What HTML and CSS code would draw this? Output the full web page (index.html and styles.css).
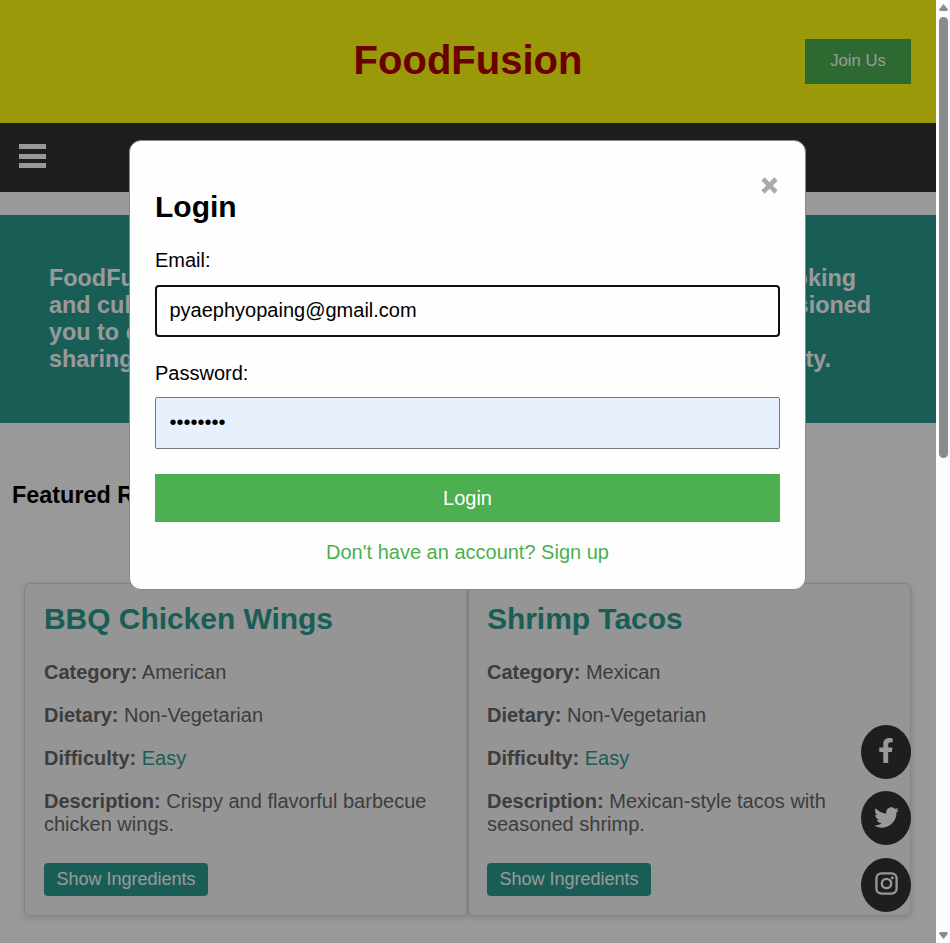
FILE: index.html
```html
<!DOCTYPE html>
<html lang="en">
<head>
<meta charset="utf-8">
<title>FoodFusion</title>
<link rel="stylesheet" href="styles.css">
</head>
<body>
<div class="page">
  <header class="header">
    <h1 class="brand">FoodFusion</h1>
    <button class="join">Join Us</button>
  </header>
  <nav class="nav">
    <span class="burger"><i></i><i></i><i></i></span>
  </nav>
  <section class="hero">
    <p class="line line-a"><span>FoodFusion</span><span>cooking</span></p>
    <p class="line line-b"><span>and culinary</span><span>passioned</span></p>
    <p class="line"><span>you to explore</span></p>
    <p class="line line-d"><span>sharing</span><span>community.</span></p>
  </section>
  <h2 class="featured">Featured Recipes</h2>
  <section class="cards">
    <article class="card">
      <h3>BBQ Chicken Wings</h3>
      <p><strong>Category:</strong> American</p>
      <p><strong>Dietary:</strong> Non-Vegetarian</p>
      <p><strong>Difficulty:</strong> <span class="easy">Easy</span></p>
      <p><strong>Description:</strong> Crispy and flavorful barbecue chicken wings.</p>
      <button class="show">Show Ingredients</button>
    </article>
    <article class="card">
      <h3>Shrimp Tacos</h3>
      <p><strong>Category:</strong> Mexican</p>
      <p><strong>Dietary:</strong> Non-Vegetarian</p>
      <p><strong>Difficulty:</strong> <span class="easy">Easy</span></p>
      <p><strong>Description:</strong> Mexican-style tacos with seasoned shrimp.</p>
      <button class="show">Show Ingredients</button>
    </article>
  </section>
  <aside class="social">
    <a class="facebook"><svg viewBox="0 0 320 512" width="16" height="25"><path d="M279.14 288l14.22-92.66h-88.91v-60.13c0-25.35 12.42-50.06 52.24-50.06h40.42V6.26S260.43 0 225.36 0c-73.22 0-121.08 44.38-121.08 124.72v70.62H22.89V288h81.39v224h100.17V288z"/></svg></a>
    <a><svg viewBox="0 0 512 512" width="25" height="25"><path d="M459.37 151.716c.325 4.548.325 9.097.325 13.645 0 138.72-105.583 298.558-298.558 298.558-59.452 0-114.68-17.219-161.137-47.106 8.447.974 16.568 1.299 25.34 1.299 49.055 0 94.213-16.568 130.274-44.832-46.132-.975-84.792-31.188-98.112-72.772 6.498.974 12.995 1.624 19.818 1.624 9.421 0 18.843-1.3 27.614-3.573-48.081-9.747-84.143-51.98-84.143-102.985v-1.299c13.969 7.797 30.214 12.67 47.431 13.319-28.264-18.843-46.781-51.005-46.781-87.391 0-19.492 5.197-37.36 14.294-52.954 51.655 63.675 129.3 105.258 216.365 109.807-1.624-7.797-2.599-15.918-2.599-24.04 0-57.828 46.782-104.934 104.934-104.934 30.213 0 57.502 12.67 76.67 33.137 23.715-4.548 46.456-13.32 66.599-25.34-7.798 24.366-24.366 44.833-46.132 57.827 21.117-2.273 41.584-8.122 60.426-16.243-14.292 20.791-32.161 39.308-52.628 54.253z"/></svg></a>
    <a class="instagram"><svg viewBox="0 0 23 23" width="23" height="23"><rect x="1.4" y="1.4" width="20.200" height="20.200" rx="5"/><circle cx="11.500" cy="11.500" r="4.700"/><circle class="dot" cx="17.300" cy="5.700" r="1.500"/></svg></a>
  </aside>
  <div class="overlay">
    <form class="modal">
      <svg class="close" viewBox="0 0 17 17" width="17" height="17"><path d="M2 2l13 13M15 2L2 15"/></svg>
      <h2>Login</h2>
      <label>Email:</label>
      <div class="field focused">pyaephyopaing@gmail.com</div>
      <label class="password">Password:</label>
      <div class="field filled">••••••••</div>
      <button class="login" type="button">Login</button>
      <a class="signup">Don't have an account? Sign up</a>
    </form>
  </div>
</div>
<div class="scrollbar">
  <svg class="arrow" viewBox="0 0 9 7" width="9" height="7"><path d="M4.500 0L9 5.500 8 7H1L0 5.500z"/></svg>
  <span class="thumb"></span>
  <svg class="arrow" viewBox="0 0 9 7" width="9" height="7"><path d="M4.500 7L9 1.500 8 0H1L0 1.500z"/></svg>
</div>
</body>
</html>
```
FILE: styles.css
```css
* { box-sizing: border-box; }
body {
  margin: 0;
  height: 943px;
  display: flex;
  overflow: hidden;
  font: 20px/23px "Liberation Sans", Arial, sans-serif;
  background: #fff;
}
h1, h2, h3, p { margin: 0; }
button { font-family: inherit; border: 0; padding: 0; }
.page { position: relative; width: 936px; height: 943px; overflow: hidden; }

.header {
  height: 123px;
  padding: 0 25px 1px;
  display: grid;
  grid-template-columns: 106px 1fr 106px;
  align-items: center;
  background: #ffff10;
}
.brand {
  grid-column: 2;
  text-align: center;
  font-size: 40px;
  line-height: 46px;
  color: #b30000;
  padding-bottom: 3px;
}
.join {
  height: 45px;
  background: #4caf50;
  color: #fff;
  font-size: 16.7px;
}
.nav {
  height: 69px;
  background: #333;
  padding: 21px 19px;
}
.burger { display: flex; flex-direction: column; gap: 4.5px; width: 27px; }
.burger i { height: 5px; background: #fff; }

.hero {
  margin-top: 23px;
  height: 208px;
  padding: 50px 49px;
  background: #2a9d8f;
  color: #fff;
  font-size: 23.4px;
  font-weight: bold;
}
.line { display: flex; justify-content: space-between; line-height: 27px; }
.line-a { width: 807px; }
.line-b { width: 822px; }
.line-d { width: 782px; }
.featured { margin: 59px 0 0 12px; font-size: 23.4px; line-height: 27px; }

.cards { display: flex; margin: 74px 25px 0 24px; }
.card {
  flex: 1;
  height: 333px;
  padding: 17px 19px;
  border: 1px solid #ddd;
  border-radius: 6px;
  background: #f9f9f9;
  box-shadow: 0 2px 6px rgba(0, 0, 0, 0.15);
  color: #666;
}
.card + .card { padding-left: 18px; }
.card h3 { font-size: 30px; line-height: 35px; color: #2a9d8f; margin-bottom: 25px; letter-spacing: -0.05px; }
.card p { margin-bottom: 20px; }
.easy { color: #2a9d8f; }
.show {
  display: block;
  margin-top: 27px;
  width: 164px;
  height: 33px;
  border-radius: 4px;
  background: #2a9d8f;
  color: #fff;
  font-size: 18px;
}

.social {
  position: absolute;
  left: 861px;
  top: 725px;
  display: flex;
  flex-direction: column;
  gap: 12.4px;
}
.social a {
  width: 50px;
  height: 54px;
  border-radius: 50%;
  background: #333;
  display: flex;
  align-items: center;
  justify-content: center;
  padding-bottom: 2px;
}
.social svg { fill: #fff; }
.social .facebook { padding-bottom: 3px; }
.social .instagram svg { fill: none; stroke: #fff; stroke-width: 2.3; }
.social .instagram .dot { fill: #fff; stroke: none; }

.overlay { position: absolute; inset: 0; background: rgba(0, 0, 0, 0.4); }
.modal {
  position: relative;
  margin: 140px 0 0 129px;
  width: 677px;
  height: 450px;
  padding: 48px 25px 0;
  border: 1px solid #888;
  border-radius: 12px;
  background: #fefefe;
  color: #000;
}
.modal h2 { font-size: 30px; line-height: 35px; margin-bottom: 25px; }
.modal label { display: block; margin-bottom: 13px; }
.modal .password { margin-bottom: 12px; }
.close { position: absolute; right: 27px; top: 36px; fill: none; stroke: #aaa; stroke-width: 4.6; }
.field {
  height: 52px;
  padding-left: 13.5px;
  border: 1px solid #767676;
  border-radius: 2px;
  line-height: 49px;
  margin-bottom: 25px;
}
.focused { border: 2px solid #101010; border-radius: 4px; padding-left: 12.5px; line-height: 47px; }
.filled { background: #e8f0fe; }
.login { display: block; width: 100%; height: 48px; background: #4caf50; color: #fff; font-size: 20px; }
.signup { display: block; text-align: center; color: #4caf50; margin-top: 19px; }

.scrollbar {
  width: 14px;
  height: 943px;
  padding: 4px 2px 4px 3px;
  display: flex;
  flex-direction: column;
  align-items: center;
  background: #fcfcfc;
}
.arrow { flex: none; fill: #8b8b8b; }
.thumb { width: 9px; height: 441px; margin: 6px 0 auto; border-radius: 5px; background: #8b8b8b; }
```
